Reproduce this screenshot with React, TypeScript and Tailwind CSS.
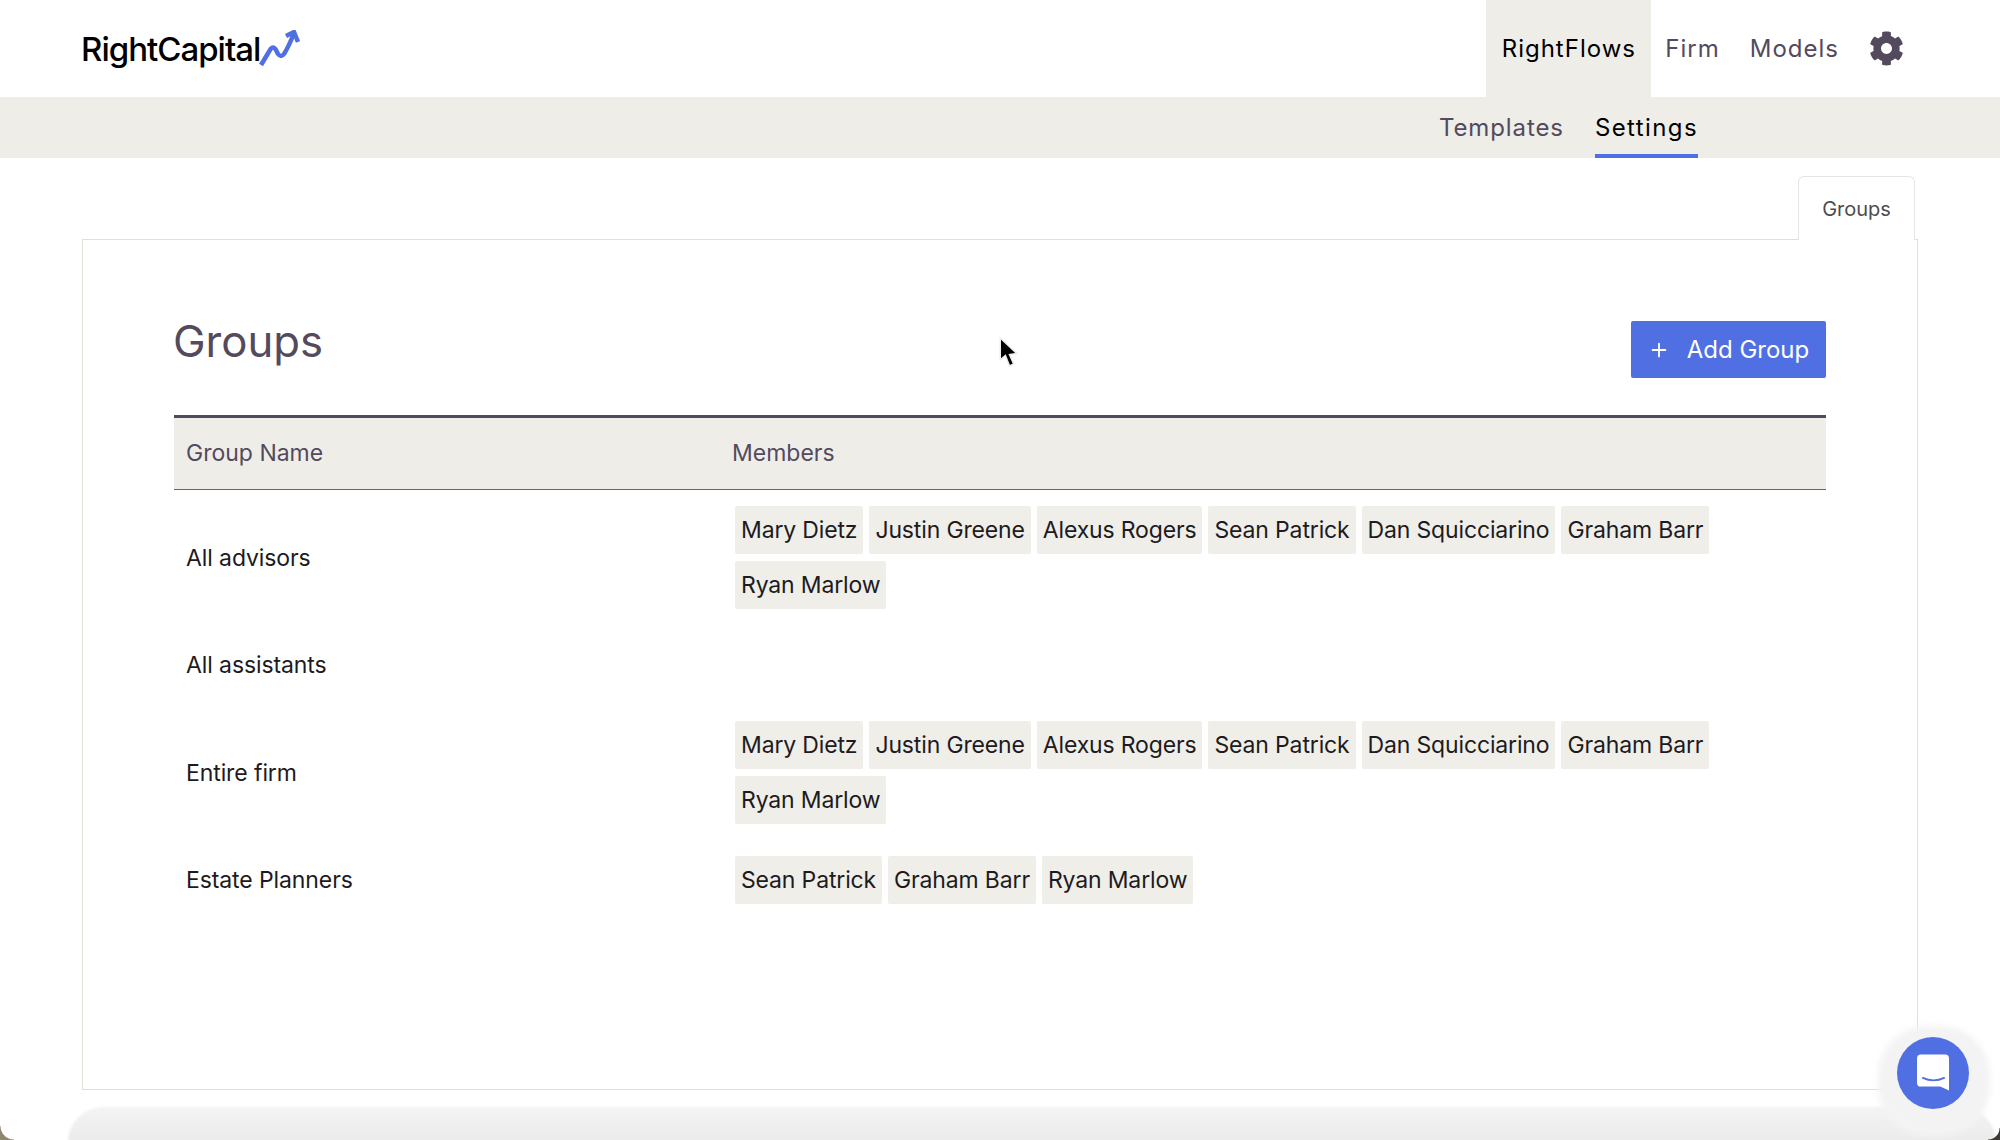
import { Plus } from "lucide-react";

const everyone = [
  "Mary Dietz",
  "Justin Greene",
  "Alexus Rogers",
  "Sean Patrick",
  "Dan Squicciarino",
  "Graham Barr",
  "Ryan Marlow",
];

const groups = [
  { name: "All advisors", members: everyone },
  { name: "All assistants", members: [] },
  { name: "Entire firm", members: everyone },
  { name: "Estate Planners", members: ["Sean Patrick", "Graham Barr", "Ryan Marlow"] },
];

function Gear() {
  return (
    <svg viewBox="0 0 512 512" className="h-[35px] w-[35px]" fill="#544a5e">
      <path d="M487.4 315.7l-42.6-24.6c4.3-23.2 4.3-47 0-70.2l42.6-24.6c4.9-2.8 7.1-8.6 5.5-14-11.1-35.6-30-67.8-54.7-94.6-3.8-4.1-10-5.1-14.8-2.3L380.8 110c-17.9-15.4-38.5-27.3-60.8-35.1V25.8c0-5.6-3.9-10.5-9.4-11.7-36.7-8.2-74.3-7.8-109.2 0-5.5 1.2-9.4 6.1-9.4 11.7V75c-22.2 7.9-42.8 19.8-60.8 35.1L88.7 85.5c-4.9-2.8-11-1.9-14.8 2.3-24.7 26.7-43.6 58.9-54.7 94.6-1.7 5.4.6 11.2 5.5 14L67.3 221c-4.3 23.2-4.3 47 0 70.2l-42.6 24.6c-4.9 2.8-7.1 8.6-5.5 14 11.1 35.6 30 67.8 54.7 94.6 3.8 4.1 10 5.1 14.8 2.3l42.6-24.6c17.9 15.4 38.5 27.3 60.8 35.1v49.2c0 5.6 3.9 10.5 9.4 11.7 36.7 8.2 74.3 7.8 109.2 0 5.5-1.2 9.4-6.1 9.4-11.7v-49.2c22.2-7.9 42.8-19.8 60.8-35.1l42.6 24.6c4.9 2.8 11 1.9 14.8-2.3 24.7-26.7 43.6-58.9 54.7-94.6 1.5-5.5-.7-11.3-5.6-14.1zM256 336c-44.1 0-80-35.9-80-80s35.9-80 80-80 80 35.9 80 80-35.9 80-80 80z" />
    </svg>
  );
}

function Logo() {
  return (
    <div className="flex items-center pt-[3px]">
      <span className="text-[33px] font-medium tracking-[-1px] text-black">RightCapital</span>
      <svg viewBox="0 0 41 37" className="-ml-[1px] -mt-[3px] h-[37px] w-[41px]" fill="none" stroke="#4f6fe3" strokeWidth="4.5">
        <path d="M2 35 L11 20 Q14 15 17 20 L19 24 Q22 28 25 24 Q30 16 35 3" />
        <path d="M27 6 L35 2 L39 12" />
      </svg>
    </div>
  );
}

function Chip({ name }: { name: string }) {
  return (
    <span className="flex h-[48px] items-center rounded-[2px] bg-[#efeee9] px-[6px] text-[23px] tracking-[-0.15px] text-[#1d1b20]">
      {name}
    </span>
  );
}

export default function App() {
  return (
    <div className="relative h-[1140px] w-[2000px] overflow-hidden bg-white font-['Inter',sans-serif]">
      <header className="flex h-[97px] items-stretch pl-[81px] pr-[96px]">
        <div className="flex flex-1 items-center">
          <Logo />
        </div>
        <nav className="flex items-center text-[24px] tracking-[1px] text-[#544a5e]">
          <span className="flex h-full w-[165px] items-center justify-center bg-[#eeede8] pt-[1px] text-black">RightFlows</span>
          <span className="ml-[14px] pt-[1px]">Firm</span>
          <span className="ml-[30px] pt-[1px]">Models</span>
          <span className="ml-[30px]">
            <Gear />
          </span>
        </nav>
      </header>

      <div className="flex h-[61px] justify-end gap-[31px] bg-[#eeede8] pr-[302px] text-[24px]">
        <span className="flex items-center pt-[1px] tracking-[0.9px] text-[#544a5e]">Templates</span>
        <span className="flex items-center border-b-[4px] border-[#4f6fe3] pt-[5px] tracking-[1.4px] text-black">Settings</span>
      </div>

      <main className="ml-[82px] mr-[82px] pt-[18px]">
        <div className="flex justify-end pr-[3px]">
          <div className="relative z-10 -mb-px flex h-[64px] w-[117px] items-center justify-center rounded-t-[6px] border border-b-0 border-[#e6e5e1] bg-white text-[20px] text-[#4d4d4d]">
            Groups
          </div>
        </div>
        <section className="h-[851px] border border-[#e3dfd8] px-[91px] pt-[80px]">
          <div className="flex h-[95px] items-start justify-between">
            <h1 className="-ml-[1px] text-[43.7px] leading-[44px] text-[#544a5e]">Groups</h1>
            <button className="mt-[1px] flex h-[57px] w-[195px] items-center justify-center gap-[17px] rounded-[2px] bg-[#4f6fe3] text-[24px] text-white">
              <Plus size={22} strokeWidth={2} />
              Add Group
            </button>
          </div>
          <div className="flex h-[75px] items-center border-t-[3px] border-b border-t-[#544a5e] border-b-[#6b6475] bg-[#eeede8] text-[23px] text-[#544a5e]">
            <span className="w-[558px] pl-[12px]">Group Name</span>
            <span>Members</span>
          </div>
          {groups.map((g) => (
            <div key={g.name} className="flex min-h-[82px] items-center pb-[14px] pt-[16px]">
              <span className="w-[558px] pl-[12px] pt-[1px] text-[23px] tracking-[-0.1px] text-[#1d1b20]">{g.name}</span>
              <div className="ml-[3px] flex flex-1 flex-wrap gap-x-[6px] gap-y-[7px]">
                {g.members.map((m) => (
                  <Chip key={m} name={m} />
                ))}
              </div>
            </div>
          ))}
        </section>
      </main>

      <div className="absolute -bottom-[2px] left-[68px] right-[4px] h-[35px] rounded-t-[70px] bg-gradient-to-b from-[#f4f4f4] to-[#ebebeb] blur-[1px]" />
      <div className="absolute left-[1878px] top-[1026px] h-[110px] w-[112px] rounded-[50px] bg-[#f3f3f3] blur-[3px]" />
      <div className="absolute bottom-0 left-0 h-[14px] w-[14px] bg-[radial-gradient(circle_at_100%_0%,transparent_13px,#8f866f_14px)]" />
      <div className="absolute bottom-0 right-0 h-[12px] w-[12px] bg-[radial-gradient(circle_at_0%_0%,transparent_11px,#3d3a36_12px)]" />

      <div className="absolute left-[1897px] top-[1037px] flex h-[72px] w-[72px] items-center justify-center rounded-full bg-[#4f6fe3]">
        <svg viewBox="0 0 34 38" className="h-[38px] w-[33px]">
          <path d="M4 0 H29 Q33 0 33 4 V37 L24 33 H4 Q0 33 0 29 V4 Q0 0 4 0 Z" fill="#fff" />
          <path d="M6 24 Q17 29 28 24" fill="none" stroke="#4f6fe3" strokeWidth="1.8" strokeLinecap="round" />
        </svg>
      </div>

      <svg viewBox="0 0 20 30" className="absolute left-[998px] top-[337px] h-[31px] w-[21px]">
        <path d="M2 1 V22 L7 18 L11 28 L15 26 L11 17 L18 16 Z" fill="#000" stroke="#eee" strokeWidth="1.5" />
      </svg>
    </div>
  );
}
